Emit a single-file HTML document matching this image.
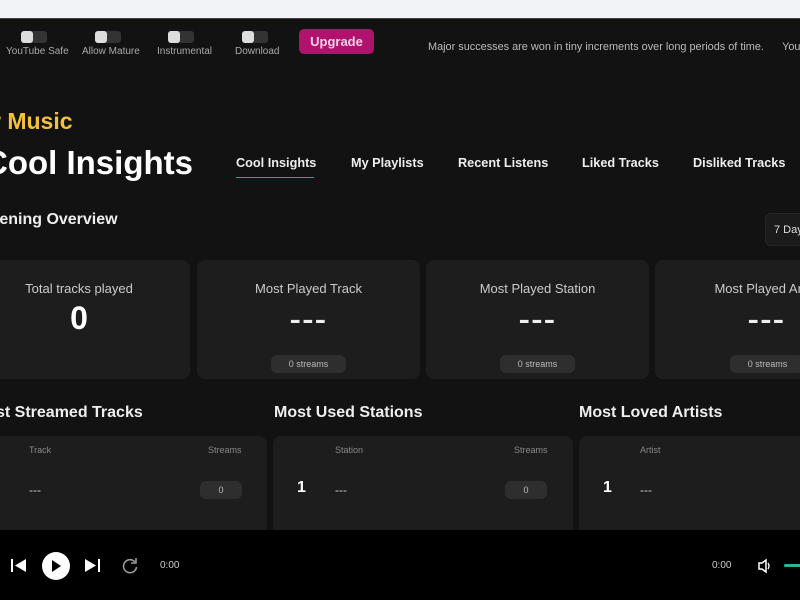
<!DOCTYPE html>
<html><head><style>
*{margin:0;padding:0;box-sizing:border-box}
body{width:800px;height:600px;overflow:hidden;background:#121212;font-family:"Liberation Sans",sans-serif;color:#fff;position:relative}
.a{position:absolute}
.top{left:0;top:0;width:800px;height:19px;background:#f1f3f6;border-bottom:1px solid #444}
.tg{width:26px;height:12px;border-radius:3px;background:#333}
.tg::before{content:"";position:absolute;left:0;top:0;width:12px;height:12px;border-radius:3px;background:#ddd}
.tl{font-size:10px;color:#aaa;white-space:nowrap}
.card{background:#1d1d1d;border-radius:8px}
.ct{font-size:13px;color:#ccc;width:100%;text-align:center}
.dash{font-size:26px;font-weight:bold;color:#eee;width:100%;text-align:center;letter-spacing:1px;transform:scaleX(1.3)}
.pill{background:#2e2e2e;border-radius:6px;font-size:9px;color:#bbb;text-align:center;line-height:18px;height:18px}
.nav{font-size:12.7px;font-weight:bold;color:#eee;top:156px}
.h2{font-size:16px;font-weight:bold;color:#eee;top:404px}
.sm{font-size:9px;color:#888}
</style></head><body>
<div class="a top"></div>
<div class="a tg" style="left:21px;top:31px"></div><div class="a tl" style="left:6px;top:46px">YouTube Safe</div>
<div class="a tg" style="left:95px;top:31px"></div><div class="a tl" style="left:82px;top:46px">Allow Mature</div>
<div class="a tg" style="left:168px;top:31px"></div><div class="a tl" style="left:157px;top:46px">Instrumental</div>
<div class="a tg" style="left:242px;top:31px"></div><div class="a tl" style="left:235px;top:46px">Download</div>
<div class="a" style="left:299px;top:29px;width:75px;height:25px;background:#b0126e;border-radius:5px;font-size:13px;font-weight:bold;text-align:center;line-height:25px;color:#f2d4e6">Upgrade</div>
<div class="a" style="left:428px;top:41px;font-size:10.9px;color:#bbb;white-space:nowrap">Major successes are won in tiny increments over long periods of time.&nbsp;&nbsp;&nbsp;&nbsp;&nbsp;&nbsp;Yourf</div>
<div class="a" style="left:-8px;top:108px;font-size:23px;font-weight:bold;color:#f5c13a">r Music</div>
<div class="a" style="left:-16px;top:144px;font-size:33px;font-weight:bold;color:#fff">Cool Insights</div>
<div class="a nav" style="left:236px">Cool Insights</div>
<div class="a" style="left:236px;top:177px;width:78px;height:1px;background:#2aa88f"></div>
<div class="a nav" style="left:351px">My Playlists</div>
<div class="a nav" style="left:458px">Recent Listens</div>
<div class="a nav" style="left:582px">Liked Tracks</div>
<div class="a nav" style="left:693px">Disliked Tracks</div>
<div class="a" style="left:-6px;top:211px;font-size:16px;font-weight:bold;color:#eee">tening Overview</div>
<div class="a" style="left:765px;top:213px;width:50px;height:33px;background:#1b1b1b;border:1px solid #262626;border-radius:6px;font-size:11px;color:#ddd;padding:10px 0 0 8px">7 Days</div>
<div class="a card" style="left:-32px;top:260px;width:222px;height:119px"><div class="a ct" style="top:21px;left:0">Total tracks played</div><div class="a" style="top:40px;width:100%;text-align:center;font-size:32px;font-weight:bold">0</div></div>
<div class="a card" style="left:197px;top:260px;width:223px;height:119px"><div class="a ct" style="top:21px">Most Played Track</div><div class="a dash" style="top:44px">---</div><div class="a pill" style="left:74px;top:95px;width:75px">0 streams</div></div>
<div class="a card" style="left:426px;top:260px;width:223px;height:119px"><div class="a ct" style="top:21px">Most Played Station</div><div class="a dash" style="top:44px">---</div><div class="a pill" style="left:74px;top:95px;width:75px">0 streams</div></div>
<div class="a card" style="left:655px;top:260px;width:223px;height:119px"><div class="a ct" style="top:21px">Most Played Artist</div><div class="a dash" style="top:44px">---</div><div class="a pill" style="left:75px;top:95px;width:75px">0 streams</div></div>
<div class="a h2" style="left:-4px">st Streamed Tracks</div>
<div class="a h2" style="left:274px">Most Used Stations</div>
<div class="a h2" style="left:579px">Most Loved Artists</div>
<div class="a card" style="left:-20px;top:436px;width:287px;height:100px"><div class="a sm" style="left:49px;top:9px">Track</div><div class="a sm" style="left:228px;top:9px">Streams</div><div class="a" style="left:49px;top:47px;font-size:12px;color:#ccc">---</div><div class="a pill" style="left:220px;top:45px;width:42px">0</div></div>
<div class="a card" style="left:273px;top:436px;width:300px;height:100px"><div class="a" style="left:24px;top:43px;font-size:16px;font-weight:bold">1</div><div class="a sm" style="left:62px;top:9px">Station</div><div class="a sm" style="left:241px;top:9px">Streams</div><div class="a" style="left:62px;top:47px;font-size:12px;color:#ccc">---</div><div class="a pill" style="left:232px;top:45px;width:42px">0</div></div>
<div class="a card" style="left:579px;top:436px;width:240px;height:100px"><div class="a" style="left:24px;top:43px;font-size:16px;font-weight:bold">1</div><div class="a sm" style="left:61px;top:9px">Artist</div><div class="a" style="left:61px;top:47px;font-size:12px;color:#ccc">---</div></div>
<div class="a" style="left:0;top:530px;width:800px;height:70px;background:#000"></div>
<svg class="a" style="left:10px;top:558px" width="18" height="16"><rect x="1" y="1" width="2" height="13" fill="#fff"/><path d="M16 1 L5 7.5 L16 14Z" fill="#fff"/></svg>
<div class="a" style="left:42px;top:552px;width:28px;height:28px;border-radius:50%;background:#fff"></div>
<svg class="a" style="left:50px;top:559px" width="14" height="14"><path d="M2 1 L11 7 L2 13Z" fill="#000"/></svg>
<svg class="a" style="left:84px;top:558px" width="18" height="16"><path d="M1 1 L12 7.5 L1 14Z" fill="#fff"/><rect x="14" y="1" width="2" height="13" fill="#fff"/></svg>
<svg class="a" style="left:121px;top:557px" width="18" height="18"><path d="M14 5 A6.5 6.5 0 1 0 15.5 10" fill="none" stroke="#999" stroke-width="1.6"/><path d="M15 1 L15 6 L10 6" fill="none" stroke="#999" stroke-width="1.6"/></svg>
<div class="a" style="left:160px;top:560px;font-size:10px;color:#ccc">0:00</div>
<div class="a" style="left:712px;top:560px;font-size:10px;color:#ccc">0:00</div>
<svg class="a" style="left:757px;top:558px" width="16" height="16"><path d="M2 5 H5 L9 2 V14 L5 11 H2Z" fill="none" stroke="#fff" stroke-width="1.5"/><path d="M11 5 Q13 8 11 11" fill="none" stroke="#fff" stroke-width="1.3"/></svg>
<div class="a" style="left:784px;top:564px;width:20px;height:3px;border-radius:2px;background:#2ab3a0"></div>
</body></html>
